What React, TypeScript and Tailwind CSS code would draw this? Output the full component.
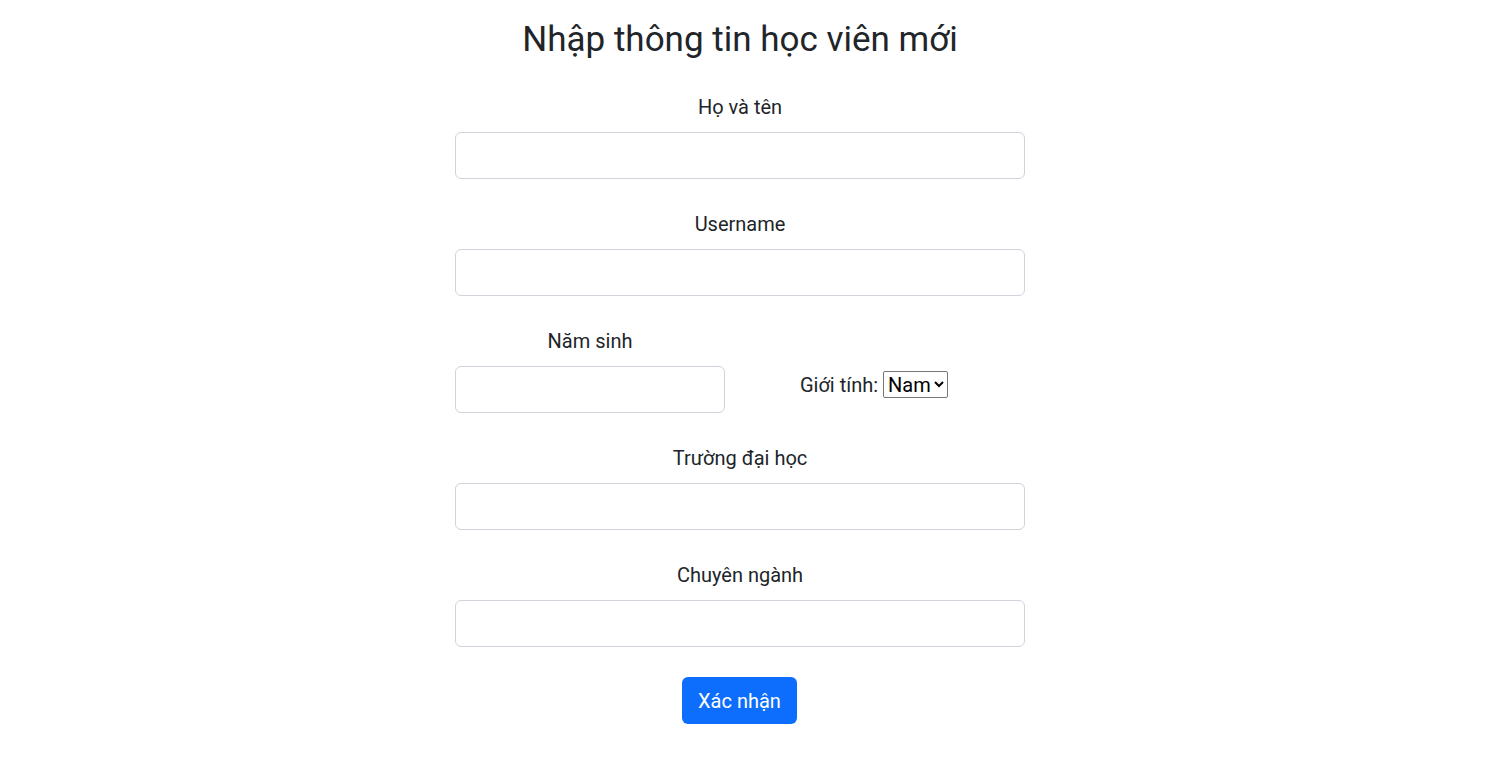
import { useState } from "react";

const Field = ({ label }: { label: string }) => {
  return (
    <div className="w-full flex flex-col items-center mb-[29px]">
      <label className="mt-px text-[20px] leading-[30px] mb-[10px]">{label}</label>
      <input
        type="text"
        className="w-full h-[47px] px-4 text-[20px] border border-[#ced4da] rounded-md bg-white outline-none"
      />
    </div>
  );
};

const App = () => {
  const [gender, setGender] = useState("Nam");
  return (
    <div className="min-h-screen bg-white text-[#212529] font-['Roboto','Noto_Sans',sans-serif] flex justify-center pr-5">
      <form
        className="w-[570px] pt-[19px] flex flex-col items-center"
        onSubmit={(e) => e.preventDefault()}
      >
        <h2 className="text-[35px] leading-[1.2] mb-[30px]">Nhập thông tin học viên mới</h2>

        <Field label="Họ và tên" />
        <Field label="Username" />

        <div className="w-full flex mb-[29px]">
          <div className="w-[270px] flex flex-col items-center">
            <label className="mt-px text-[20px] leading-[30px] mb-[10px]">Năm sinh</label>
            <input
              type="text"
              className="w-full h-[47px] px-4 text-[20px] border border-[#ced4da] rounded-md bg-white outline-none"
            />
          </div>
          <div className="flex-1 flex flex-col justify-end">
            <div className="h-[47px] pb-[10px] pr-[2px] flex items-center justify-center text-[20px]">
              <span>Giới tính:</span>
              <select
                value={gender}
                onChange={(e) => setGender(e.target.value)}
                className="ml-[5px] h-[27px] w-[65px] border border-[#767676] rounded-[2px] text-[20px] leading-none text-black bg-white"
              >
                <option>Nam</option>
                <option>Nữ</option>
              </select>
            </div>
          </div>
        </div>

        <Field label="Trường đại học" />
        <Field label="Chuyên ngành" />

        <button
          type="submit"
          className="mt-px mr-px h-[47px] w-[115px] text-[20px] text-white bg-[#0d6efd] rounded-md"
        >
          Xác nhận
        </button>
      </form>
    </div>
  );
};

export default App;
